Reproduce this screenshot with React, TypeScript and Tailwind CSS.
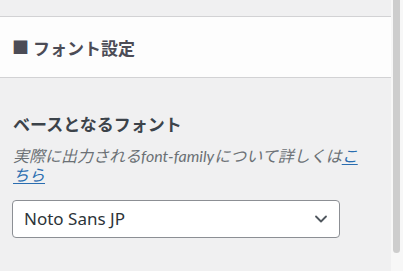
import { ChevronDown } from 'lucide-react';

export default function App() {
  return (
    <div className="flex w-[403px] h-[271px] overflow-hidden bg-[#f0f0f1] font-['Noto_Sans_CJK_JP','Noto_Sans',sans-serif]">
      {/* Panel */}
      <div className="w-[391px] flex flex-col">
        <div className="h-[17px] shrink-0 border-b border-[#d2d2d4]" />

        {/* Section title */}
        <div className="h-[61px] shrink-0 flex items-center px-[12px] bg-[#fdfdfd] border-b border-[#d2d2d4]">
          <h2 className="text-[17px] leading-none font-bold text-[#4c4c56]">
            <span className="text-[17px] mr-[4px] relative top-[-1px]">■</span>フォント設定
          </h2>
        </div>

        {/* Field */}
        <div className="px-[13px] pt-[34px]">
          <h3 className="text-[17px] leading-[24px] font-bold text-[#3c434a]">ベースとなるフォント</h3>
          <p className="mt-[10px] w-[360px] text-[16px] leading-[19px] italic text-[#6b7075]">
            実際に出力される<span className="font-['Lato',sans-serif]">font-family</span>について詳しくは<a href="#" className="text-[#2a6db0] underline underline-offset-2">こちら</a>
          </p>

          <div className="mt-[16px] ml-[-1px] w-[328px] h-[38px] flex items-center justify-between pl-[11px] pr-[8px] bg-white border border-[#8c8f94] rounded-[4px]">
            <span className="text-[17px] text-[#2c3338] font-['Noto_Sans',sans-serif]">Noto Sans JP</span>
            <ChevronDown className="w-[20px] h-[20px] text-[#50575e]" strokeWidth={2.2} />
          </div>
        </div>
      </div>

      {/* Scrollbar */}
      <div className="w-[12px] flex pl-[2px] bg-[#f7f7f7]">
        <div className="w-[7px] h-[253px] bg-[#cdcdcd] rounded-b-[4px]" />
      </div>
    </div>
  );
}
